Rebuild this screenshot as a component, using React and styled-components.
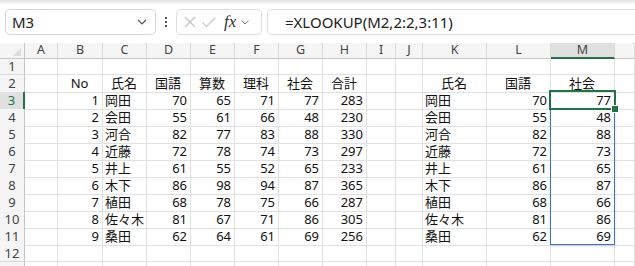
import styled, { createGlobalStyle } from 'styled-components';

const GlobalStyle = createGlobalStyle`
  html, body {
    margin: 0;
    padding: 0;
    background: #fff;
    overflow: hidden;
  }
  body {
    font-family: "Noto Sans", "Noto Sans CJK JP", sans-serif;
  }
`;

const COLS = [25, 33, 45, 44, 44, 44, 44, 44, 44, 29, 27, 64, 64, 64, 20];
const LETTERS = ['', 'A', 'B', 'C', 'D', 'E', 'F', 'G', 'H', 'I', 'J', 'K', 'L', 'M', ''];
const ROW_H = 17;
const HEAD_H = 15;

const scores = [
  [1, '岡田', 70, 65, 71, 77, 283],
  [2, '会田', 55, 61, 66, 48, 230],
  [3, '河合', 82, 77, 83, 88, 330],
  [4, '近藤', 72, 78, 74, 73, 297],
  [5, '井上', 61, 55, 52, 65, 233],
  [6, '木下', 86, 98, 94, 87, 365],
  [7, '植田', 68, 78, 75, 66, 287],
  [8, '佐々木', 81, 67, 71, 86, 305],
  [9, '桑田', 62, 64, 61, 69, 256],
];

// builds the 14 data cells (A..N) of one sheet row
const buildRow = (r) => {
  const cells = Array(14).fill(null);
  if (r === 2) {
    ['No', '氏名', '国語', '算数', '理科', '社会', '合計'].forEach((t, i) => {
      cells[1 + i] = { v: t, align: 'center' };
    });
    cells[10] = { v: '氏名', align: 'center' };
    cells[11] = { v: '国語', align: 'center' };
    cells[12] = { v: '社会', align: 'center' };
  } else if (r >= 3 && r <= 11) {
    const d = scores[r - 3];
    cells[1] = { v: d[0], align: 'right' };
    cells[2] = { v: d[1], align: 'left' };
    for (let i = 2; i < 7; i++) cells[1 + i] = { v: d[i], align: 'right' };
    cells[10] = { v: d[1], align: 'left' };
    cells[11] = { v: d[2], align: 'right' };
    cells[12] = { v: d[5], align: 'right' };
  }
  return cells;
};

const App = () => {
  const rows = Array.from({ length: 13 }, (_, i) => i + 1);
  const mLeft = COLS.slice(0, 13).reduce((a, b) => a + b, 0);

  return (
    <>
      <GlobalStyle />
      <Screen>
        <TopShade />
        <Toolbar>
          <NameBox>
            <span>M3</span>
            <Chevron width="12" height="8" viewBox="0 0 12 8">
              <path d="M2 2 L6 6 L10 2" fill="none" stroke="#555" strokeWidth="1.2" />
            </Chevron>
          </NameBox>
          <Dots>
            <i /><i /><i />
          </Dots>
          <FxBox>
            <svg width="14" height="14" viewBox="0 0 14 14">
              <path d="M2 2 L12 12 M12 2 L2 12" stroke="#c4c4c4" strokeWidth="1.2" fill="none" />
            </svg>
            <svg width="16" height="14" viewBox="0 0 16 14">
              <path d="M1.5 7.5 L5.5 11.5 L14.5 2.5" stroke="#c8c8c8" strokeWidth="1.2" fill="none" />
            </svg>
            <FxLabel>fx</FxLabel>
            <svg width="10" height="8" viewBox="0 0 10 8">
              <path d="M1.5 2.5 L5 6 L8.5 2.5" fill="none" stroke="#777" strokeWidth="1" />
            </svg>
          </FxBox>
          <FormulaBox>=XLOOKUP(M2,2:2,3:11)</FormulaBox>
        </Toolbar>

        <Sheet>
          <Row $h={HEAD_H}>
            {LETTERS.map((l, i) => (
              <ColHead key={i} $corner={i === 0} $active={l === 'M'}>
                {i === 0 ? <Corner /> : l}
              </ColHead>
            ))}
          </Row>
          {rows.map((r) => {
            const cells = buildRow(r);
            return (
              <Row key={r} $h={ROW_H}>
                <RowHead $active={r === 3}>{r <= 12 ? r : ''}</RowHead>
                {cells.map((c, ci) => (
                  <Cell key={ci} $align={c ? c.align : 'left'}>
                    {c ? c.v : ''}
                  </Cell>
                ))}
              </Row>
            );
          })}

          <RangeBox
            style={{
              left: mLeft - 1,
              top: HEAD_H + ROW_H * 3 - 1,
              width: COLS[13] + 1,
              height: ROW_H * 8 + 1,
            }}
          />
          <ActiveBox
            style={{
              left: mLeft - 2,
              top: HEAD_H + ROW_H * 2 - 2,
              width: COLS[13] + 3,
              height: ROW_H + 3,
            }}
          />
          <FillHandle
            style={{
              left: mLeft + COLS[13] - 3,
              top: HEAD_H + ROW_H * 3 - 3,
            }}
          />
        </Sheet>
      </Screen>
    </>
  );
};

export default App;

/*======================== layout ============= */

const Screen = styled.div`
  width: 635px;
  height: 266px;
  position: relative;
  overflow: hidden;
  background: #fff;
`;

const TopShade = styled.div`
  height: 5px;
  background: linear-gradient(#e4e4e4, #f4f4f4 60%, #fff);
`;

const Toolbar = styled.div`
  height: 38px;
  display: flex;
  align-items: flex-start;
  padding: 4px 0 0 5px;
  box-sizing: border-box;
`;

const NameBox = styled.div`
  width: 151px;
  height: 26px;
  box-sizing: border-box;
  border: 1px solid #d6d6d6;
  border-radius: 5px;
  display: flex;
  align-items: center;
  justify-content: space-between;
  padding: 0 7px 0 6px;
  font-family: "Noto Sans", sans-serif;
  font-size: 15px;
  color: #222;
`;

const Chevron = styled.svg`
  display: block;
`;

const Dots = styled.div`
  width: 20px;
  height: 26px;
  display: flex;
  flex-direction: column;
  align-items: center;
  justify-content: center;
  gap: 2px;

  i {
    display: block;
    width: 2px;
    height: 2px;
    background: #555;
  }
`;

const FxBox = styled.div`
  width: 86px;
  height: 26px;
  box-sizing: border-box;
  border: 1px solid #dedede;
  border-radius: 5px;
  display: flex;
  align-items: center;
  padding: 0 3px 0 6px;
  gap: 4px;
  margin-right: 5px;

  svg {
    display: block;
  }
`;

const FxLabel = styled.span`
  font-family: "Liberation Serif", "DejaVu Serif", serif;
  font-style: italic;
  font-weight: normal;
  font-size: 17px;
  line-height: 20px;
  color: #333;
  margin-left: 3px;
`;

const FormulaBox = styled.div`
  flex: 1;
  height: 26px;
  box-sizing: border-box;
  border: 1px solid #dedede;
  border-right: none;
  border-radius: 5px 0 0 5px;
  display: flex;
  align-items: center;
  padding-left: 17px;
  font-family: "Noto Sans", sans-serif;
  font-size: 15px;
  color: #222;
  white-space: nowrap;
`;

const Sheet = styled.div`
  position: relative;
`;

const Row = styled.div`
  display: grid;
  grid-template-columns: ${COLS.map((w) => w + 'px').join(' ')};
  height: ${(p) => p.$h}px;
`;

const ColHead = styled.div`
  box-sizing: border-box;
  background: ${(p) => (p.$active ? '#e0e0e0' : '#f5f5f5')};
  border-right: 1px solid ${(p) => (p.$corner ? '#c6c6c6' : '#dadada')};
  border-bottom: ${(p) => (p.$active ? '2px solid #217346' : '1px solid #c6c6c6')};
  font-family: "Noto Sans", sans-serif;
  font-size: 12.5px;
  line-height: 14px;
  color: #444;
  text-align: center;
  position: relative;
`;

const Corner = styled.div`
  position: absolute;
  right: 3px;
  bottom: 2px;
  width: 0;
  height: 0;
  border-left: 8px solid transparent;
  border-bottom: 8px solid #dcdcdc;
`;

const RowHead = styled.div`
  box-sizing: border-box;
  background: ${(p) => (p.$active ? '#e0e0e0' : '#f5f5f5')};
  border-right: ${(p) => (p.$active ? '2px solid #217346' : '1px solid #c6c6c6')};
  border-bottom: 1px solid #dadada;
  font-family: "Noto Sans", sans-serif;
  font-size: 13px;
  line-height: 16px;
  color: ${(p) => (p.$active ? '#217346' : '#444')};
  text-align: center;
`;

const Cell = styled.div`
  box-sizing: border-box;
  border-right: 1px solid #e1e1e1;
  border-bottom: 1px solid #e1e1e1;
  font-family: "Noto Sans", "Noto Sans CJK JP", sans-serif;
  font-size: 13px;
  line-height: 17px;
  color: #111;
  text-align: ${(p) => p.$align};
  padding: 0 3px 0 2px;
  white-space: nowrap;
`;

const RangeBox = styled.div`
  position: absolute;
  box-sizing: border-box;
  border: 1px solid #3b72cf;
  box-shadow: 0 1px 3px rgba(0, 0, 0, 0.12);
  pointer-events: none;
`;

const ActiveBox = styled.div`
  position: absolute;
  box-sizing: border-box;
  border: 2px solid #217346;
  pointer-events: none;
`;

const FillHandle = styled.div`
  position: absolute;
  width: 6px;
  height: 6px;
  box-sizing: border-box;
  background: #217346;
  outline: 1px solid #fff;
`;
